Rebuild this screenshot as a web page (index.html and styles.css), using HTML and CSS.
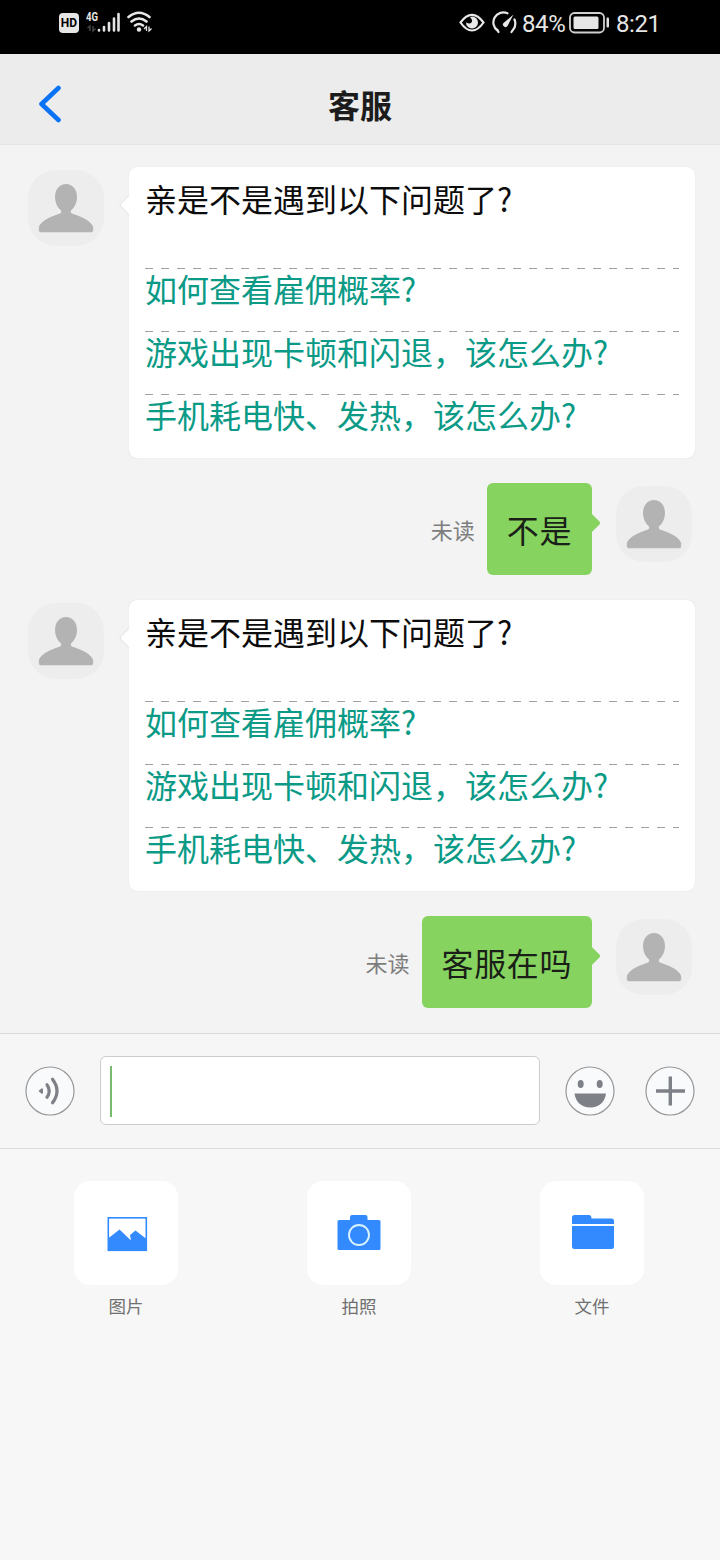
FILE: index.html
```html
<!DOCTYPE html>
<html lang="zh-CN">
<head>
<meta charset="utf-8">
<title>客服</title>
<link rel="stylesheet" href="styles.css">
</head>
<body>
<svg class="defs" width="0" height="0">
  <symbol id="person" viewBox="0 0 76 76">
    <path d="M38 14.500C31.500 14.500 27.500 19.500 27.500 27C27.500 33 30 37.500 33.500 40.500Q34.200 43 32 44C26 46 13 50.500 11.300 57V60.500Q11.300 61.800 12.500 61.800H63.500Q64.700 61.800 64.700 60.500V57C63 50.500 50 46 44 44Q41.800 43 42.500 40.500C46 37.500 48.500 33 48.500 27C48.500 19.500 44.500 14.500 38 14.500Z" fill="#b3b3b3" stroke="#aaa" stroke-width=".7"/>
  </symbol>
</svg>
<header class="status">
  <div class="status-left">
    <span class="hd">HD</span>
    <svg class="signal" width="36" height="26" viewBox="0 0 36 26">
      <text class="net" x="1" y="10.500" textLength="12" lengthAdjust="spacingAndGlyphs">4G</text>
      <path d="M5 21V16L2.500 18M8 16V21L10.500 18.500" fill="none" stroke="#444" stroke-width="1.500"/>
      <g stroke="#e4e4e4" stroke-width="2.600" stroke-linecap="round"><path d="M14 20V20.500M19 17V20.500M24 13V20.500M29 8.500V20.500M33.500 4V20.500" /></g>
    </svg>
    <svg class="wifi" width="28" height="26" viewBox="0 0 28 26">
      <g fill="none" stroke="#e8e8e8" stroke-width="2.600" stroke-linecap="round"><path d="M2.500 7Q13 -1.500 23.500 7M5.500 11.500Q13 5.500 20.500 11.500M9 15.500Q13 12.500 17 15.500"/></g>
      <circle cx="13" cy="19.500" r="2.200" fill="#e8e8e8"/>
      <path d="M20.500 21V16.500L18 19M23 16.500V21L25.500 18.500" fill="none" stroke="#e8e8e8" stroke-width="1.300"/>
    </svg>
  </div>
  <div class="status-right">
    <svg width="26" height="22" viewBox="0 0 26 22">
      <path d="M1.500 10.500Q7 2.800 13 2.800T24.500 10.500Q19 18.500 13 18.500T1.500 10.500Z" fill="none" stroke="#e8e8e8" stroke-width="2.200"/>
      <path d="M13 4.500A6 6 0 1 1 7 10.500Q12 13 13 9.500Q13.500 7 11 5.500Z" fill="#e8e8e8"/>
    </svg>
    <svg class="gauge" width="26" height="24" viewBox="0 0 26 24">
      <path d="M6.500 21L5.500 19M5.500 19.500A10 10 0 0 1 15.500 2.300M22.500 8.500A10.500 10.500 0 0 1 20.500 19.500L19.500 21" fill="none" stroke="#e8e8e8" stroke-width="2.200" stroke-linecap="round"/>
      <path d="M21.500 3.500L15.500 15A2.500 2.500 0 0 1 11.500 12Z" fill="#e8e8e8"/>
    </svg>
    <span class="percent">84%</span>
    <svg class="battery" width="42" height="22" viewBox="0 0 42 22">
      <rect x="1" y="1" width="34" height="19.500" rx="4.500" fill="none" stroke="#d0d0d0" stroke-width="1.800"/>
      <rect x="4.500" y="4.500" width="25" height="12.500" rx="1.500" fill="#e6e6e6"/>
      <rect x="37.500" y="5.500" width="2.500" height="10" rx="1" fill="#e0e0e0"/>
    </svg>
    <span class="clock">8:21</span>
  </div>
</header>
<nav class="titlebar">
  <svg class="back" width="24" height="38" viewBox="0 0 24 38"><path d="M20.500 3L3.500 19L20.500 35" fill="none" stroke="#0a73f5" stroke-width="4.600" stroke-linecap="round" stroke-linejoin="round"/></svg>
  <h1 class="title">客服</h1>
</nav>
<main class="chat">
  <section class="row">
    <svg class="avatar"><use href="#person"/></svg>
    <div class="card">
      <p class="lead">亲是不是遇到以下问题了?</p>
      <a class="ask">如何查看雇佣概率?</a>
      <a class="ask">游戏出现卡顿和闪退，该怎么办?</a>
      <a class="ask">手机耗电快、发热，该怎么办?</a>
    </div>
  </section>
  <section class="row mine">
    <span class="unread">未读</span>
    <div class="reply">不是</div>
    <svg class="avatar"><use href="#person"/></svg>
  </section>
  <section class="row">
    <svg class="avatar"><use href="#person"/></svg>
    <div class="card">
      <p class="lead">亲是不是遇到以下问题了?</p>
      <a class="ask">如何查看雇佣概率?</a>
      <a class="ask">游戏出现卡顿和闪退，该怎么办?</a>
      <a class="ask">手机耗电快、发热，该怎么办?</a>
    </div>
  </section>
  <section class="row mine">
    <span class="unread">未读</span>
    <div class="reply">客服在吗</div>
    <svg class="avatar"><use href="#person"/></svg>
  </section>
</main>
<section class="composer">
  <svg class="tool" viewBox="0 0 50 50">
    <circle class="ring" cx="25" cy="25" r="24"/>
    <path d="M14.800 25L17 23.300V26.700Z" fill="#7d8087" stroke="#7d8087" stroke-width="2" stroke-linejoin="round"/>
    <path d="M22 18.700Q26.500 25 22 31.300M27.500 13.200Q36.500 25 27.500 36.800" fill="none" stroke="#7d8087" stroke-width="3.200" stroke-linecap="round"/>
  </svg>
  <div class="field"><i class="caret"></i></div>
  <svg class="tool smile" viewBox="0 0 50 50">
    <circle class="ring" cx="25" cy="25" r="24"/>
    <ellipse cx="15.700" cy="18" rx="3" ry="4" fill="#7d8087"/><ellipse cx="34.700" cy="18" rx="3" ry="4" fill="#7d8087"/>
    <path d="M9.500 27.500H41C40 36 34 41.500 25.300 41.500S10.500 36 9.500 27.500Z" fill="#7d8087"/>
  </svg>
  <svg class="tool plus" viewBox="0 0 50 50">
    <circle class="ring" cx="25" cy="25" r="24"/>
    <path d="M11 25H40M25.300 10.500V39.500" stroke="#7d8087" stroke-width="3.400"/>
  </svg>
</section>
<section class="panel">
  <div class="action">
    <div class="tile"><svg width="104" height="104" viewBox="0 0 104 104">
      <rect x="34.300" y="36.800" width="38" height="32.500" fill="none" stroke="#338aff" stroke-width="1.600"/>
      <path d="M34 57.500L45.500 48.500L57 59.500L56 54L61.500 49.500L72.500 58V69.500H34Z" fill="#338aff"/>
    </svg></div>
    <span class="label">图片</span>
  </div>
  <div class="action">
    <div class="tile"><svg width="104" height="104" viewBox="0 0 104 104">
      <path d="M32 39H43V36Q43 34 45 34H58.500Q60.500 34 60.500 36V39H72Q73.500 39 73.500 40.500V67.500Q73.500 69 72 69H32Q30.500 69 30.500 67.500V40.500Q30.500 39 32 39Z" fill="#338aff"/>
      <circle cx="52" cy="54" r="10" fill="none" stroke="#d9f2ff" stroke-width="1.900"/>
    </svg></div>
    <span class="label">拍照</span>
  </div>
  <div class="action">
    <div class="tile"><svg width="104" height="104" viewBox="0 0 104 104">
      <path d="M32 43V36.500Q32 34 34.500 34H49Q51.500 34 51.500 37.500H71.500Q74 37.500 74 40V43Z M32 45H74V65.500Q74 68 71.500 68H34.500Q32 68 32 65.500Z" fill="#338aff"/>
    </svg></div>
    <span class="label">文件</span>
  </div>
</section>
</body>
</html>
```

FILE: styles.css
```css
* { box-sizing: border-box; }
body {
  margin: 0;
  width: 720px;
  height: 1560px;
  overflow: hidden;
  background: #f7f7f7;
  font-family: "Noto Sans CJK SC", sans-serif;
  display: flex;
  flex-direction: column;
}
svg { display: block; flex: none; }
.defs { position: absolute; }

.status {
  height: 54px;
  background: #000;
  color: #e6e6e6;
  display: flex;
  justify-content: space-between;
  padding: 0 61px 0 59px;
}
.status-left, .status-right { display: flex; align-items: center; height: 45px; }
.hd {
  width: 20px;
  height: 20px;
  border-radius: 4px;
  background: #e6e6e6;
  color: #000;
  font: bold 12px/21px Roboto, sans-serif;
  text-align: center;
}
.signal { margin-left: 6px; }
.net { font: bold 12px Roboto, sans-serif; fill: #e6e6e6; }
.wifi { margin-left: 5px; }
.gauge { margin-left: 7px; }
.percent, .clock { font: 24px/24px Roboto, sans-serif; padding-top: 2px; white-space: nowrap; }
.percent { margin-left: 4px; width: 44px; letter-spacing: -.4px; }
.battery { margin-left: 3px; }
.clock { margin-left: 5px; width: 43px; letter-spacing: -.4px; }

.titlebar {
  height: 91px;
  background: #ececec;
  border-bottom: 1px solid #e5e5e5;
  display: grid;
  grid-template-columns: 62px 1fr 62px;
  align-items: center;
  padding-bottom: 1px;
}
.back { margin-left: 38px; margin-top: 10px; }
.title { margin: 11px 0 0; text-align: center; font-size: 32px; line-height: 40px; font-weight: 700; color: #1c1c1c; }

.chat {
  height: 888px;
  background: #f3f3f3;
  padding: 22px 25px 0 28px;
  display: flex;
  flex-direction: column;
  gap: 25px;
}
.row { display: flex; align-items: flex-start; }
.avatar { width: 76px; height: 76px; border-radius: 28px; background: #ededed; margin-top: 3px; }
.card {
  position: relative;
  width: 567px;
  height: 291px;
  margin-left: 25px;
  padding: 8px 16px 0;
  border-radius: 8px;
  background: #fff;
  box-shadow: 0 0 1px #ccc;
}
.card::before, .reply::after {
  content: "";
  position: absolute;
  width: 14px;
  height: 14px;
  transform: rotate(45deg);
}
.card::before { left: -6px; top: 31px; background: #fff; border-radius: 0 0 0 2px; box-shadow: -1px 1px 1px #e6e6e6; }
.lead { margin: 0 0 47px; font-size: 32px; line-height: 46px; color: #0c0c0c; }
.ask {
  display: block;
  height: 63px;
  font-size: 32px;
  line-height: 40px;
  color: #0a9a86;
  background: repeating-linear-gradient(90deg, #a0a0a0 0 8px, transparent 8px 16px) top left / 100% 1px no-repeat;
}
.mine { justify-content: flex-end; padding-right: 3px; }
.unread { align-self: center; font-size: 22px; line-height: 32px; color: #7d7d7d; margin: 0 12px 1px 0; }
.reply {
  position: relative;
  height: 92px;
  padding: 0 20px;
  border-radius: 6px;
  background: #86d45f;
  color: #1a1f18;
  font-size: 32px;
  letter-spacing: .6px;
  line-height: 92px;
  margin-right: 24px;
}
.reply::after { right: -6px; top: 33px; background: #86d45f; border-radius: 2px; }

.composer {
  height: 116px;
  background: #f6f6f6;
  border-top: 1px solid #dcdcdc;
  border-bottom: 1px solid #dcdcdc;
  display: flex;
  align-items: center;
  padding: 0 25px;
}
.tool { width: 50px; height: 50px; }
.ring { fill: #f9fafc; stroke: #999; stroke-width: 1.2; }
.field {
  width: 440px;
  height: 69px;
  margin: 0 0 2px 25px;
  border: 1px solid #ccc;
  border-radius: 6px;
  background: #fff;
  padding: 9px;
}
.caret { display: block; width: 2px; height: 51px; background: #75bd6b; }
.smile { margin-left: 25px; }
.plus { margin-left: 30px; }

.panel { flex: 1; display: flex; justify-content: space-between; padding: 32px 76px 0 74px; }
.action { width: 104px; text-align: center; }
.tile { width: 104px; height: 104px; border-radius: 16px; background: #fff; }
.label { display: block; margin-top: 7px; font-size: 17.500px; line-height: 27px; color: #707070; }
```
